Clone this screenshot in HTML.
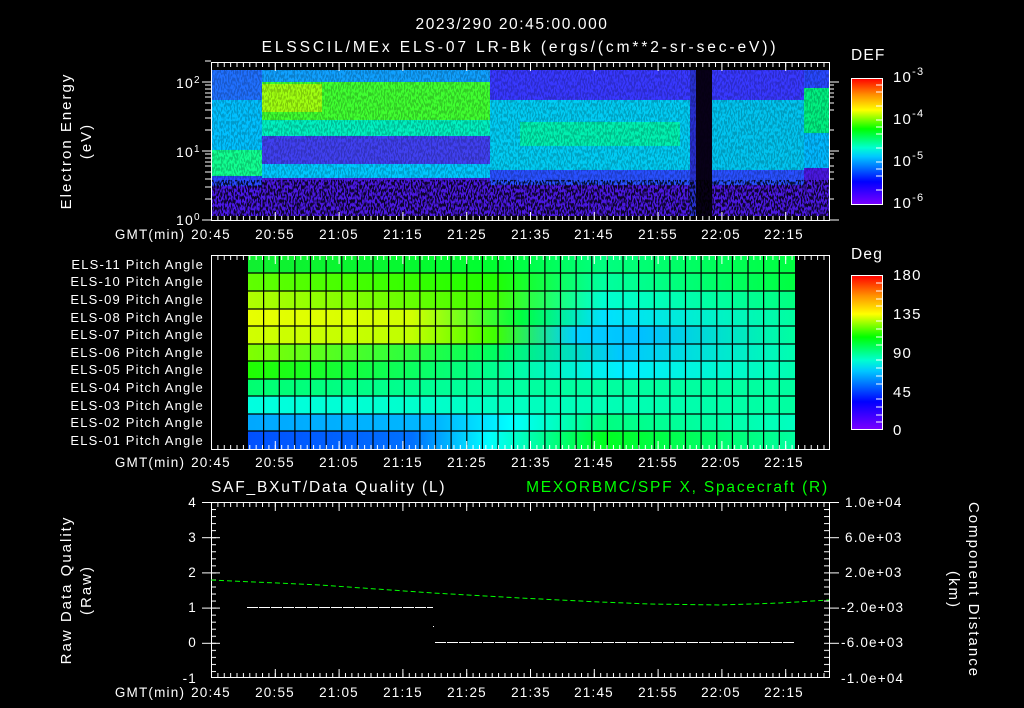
<!DOCTYPE html>
<html><head><meta charset="utf-8"><style>
html,body{margin:0;padding:0;background:#000;}
svg{display:block;}
text{font-family:"Liberation Sans",sans-serif;fill:#fff;letter-spacing:1.2px;}
</style></head><body>
<svg width="1024" height="708" viewBox="0 0 1024 708" xmlns="http://www.w3.org/2000/svg">
<defs>
 <pattern id="tmin" x="211" y="0" width="6.38" height="708" patternUnits="userSpaceOnUse"><rect x="0" y="0" width="1" height="708" fill="#fff"/></pattern>
 <pattern id="tmaj" x="211" y="0" width="63.8" height="708" patternUnits="userSpaceOnUse"><rect x="0" y="0" width="1" height="708" fill="#fff"/></pattern>
 <pattern id="ymin" x="0" y="502" width="20" height="7.04" patternUnits="userSpaceOnUse"><rect x="0" y="0" width="20" height="1" fill="#fff"/></pattern>
 <pattern id="ymaj" x="0" y="502" width="20" height="35.2" patternUnits="userSpaceOnUse"><rect x="0" y="0" width="20" height="1" fill="#fff"/></pattern>
 <linearGradient id="cb" x1="0" y1="1" x2="0" y2="0">
  <stop offset="0" stop-color="#7a00ff"/><stop offset="0.18" stop-color="#0000ff"/><stop offset="0.38" stop-color="#00c8ff"/><stop offset="0.45" stop-color="#00ffd0"/><stop offset="0.6" stop-color="#00ff00"/><stop offset="0.75" stop-color="#ffff00"/><stop offset="0.87" stop-color="#ff9000"/><stop offset="1" stop-color="#ff0000"/>
 </linearGradient>
 <filter id="nz" x="0" y="0" width="1" height="1"><feTurbulence type="fractalNoise" baseFrequency="0.7 0.28" numOctaves="1" seed="5"/><feColorMatrix type="matrix" values="0 0 0 0 0  0 0 0 0 0  0 0 0 0 0  0 0 0 -9 4.9"/></filter>
 <linearGradient id="r11" gradientUnits="userSpaceOnUse" x1="248" x2="795" y1="0" y2="0"><stop offset="0" stop-color="#10f030"/><stop offset="0.45" stop-color="#00ff30"/><stop offset="0.65" stop-color="#00ff80"/><stop offset="1" stop-color="#00ff40"/></linearGradient>
 <linearGradient id="r10" gradientUnits="userSpaceOnUse" x1="248" x2="795" y1="0" y2="0"><stop offset="0" stop-color="#60ff00"/><stop offset="0.45" stop-color="#20ff00"/><stop offset="0.65" stop-color="#00ffa0"/><stop offset="1" stop-color="#00ff40"/></linearGradient>
 <linearGradient id="r9" gradientUnits="userSpaceOnUse" x1="248" x2="795" y1="0" y2="0"><stop offset="0" stop-color="#b0ff00"/><stop offset="0.45" stop-color="#40ff00"/><stop offset="0.65" stop-color="#00ffd0"/><stop offset="1" stop-color="#00ff80"/></linearGradient>
 <linearGradient id="r8" gradientUnits="userSpaceOnUse" x1="248" x2="795" y1="0" y2="0"><stop offset="0" stop-color="#e8ff00"/><stop offset="0.3" stop-color="#d0ff00"/><stop offset="0.5" stop-color="#00ff40"/><stop offset="0.65" stop-color="#00e0ff"/><stop offset="1" stop-color="#00ffa0"/></linearGradient>
 <linearGradient id="r7" gradientUnits="userSpaceOnUse" x1="248" x2="795" y1="0" y2="0"><stop offset="0" stop-color="#d0ff00"/><stop offset="0.3" stop-color="#c0ff00"/><stop offset="0.45" stop-color="#40ff00"/><stop offset="0.6" stop-color="#00d0ff"/><stop offset="0.72" stop-color="#00c0ff"/><stop offset="1" stop-color="#00ffa0"/></linearGradient>
 <linearGradient id="r6" gradientUnits="userSpaceOnUse" x1="248" x2="795" y1="0" y2="0"><stop offset="0" stop-color="#80ff00"/><stop offset="0.45" stop-color="#00ff60"/><stop offset="0.68" stop-color="#00c8ff"/><stop offset="1" stop-color="#00ffb0"/></linearGradient>
 <linearGradient id="r5" gradientUnits="userSpaceOnUse" x1="248" x2="795" y1="0" y2="0"><stop offset="0" stop-color="#20ff00"/><stop offset="0.45" stop-color="#00ff90"/><stop offset="0.68" stop-color="#00eeff"/><stop offset="1" stop-color="#00ffb0"/></linearGradient>
 <linearGradient id="r4" gradientUnits="userSpaceOnUse" x1="248" x2="795" y1="0" y2="0"><stop offset="0" stop-color="#00ff70"/><stop offset="0.45" stop-color="#00ffa0"/><stop offset="1" stop-color="#00ffa0"/></linearGradient>
 <linearGradient id="r3" gradientUnits="userSpaceOnUse" x1="248" x2="795" y1="0" y2="0"><stop offset="0" stop-color="#00ffe0"/><stop offset="0.5" stop-color="#00ffc0"/><stop offset="1" stop-color="#00ffa0"/></linearGradient>
 <linearGradient id="r2" gradientUnits="userSpaceOnUse" x1="248" x2="795" y1="0" y2="0"><stop offset="0" stop-color="#00a8ff"/><stop offset="0.35" stop-color="#00b8ff"/><stop offset="0.48" stop-color="#00ffff"/><stop offset="0.65" stop-color="#00ff80"/><stop offset="1" stop-color="#00ffc0"/></linearGradient>
 <linearGradient id="r1" gradientUnits="userSpaceOnUse" x1="248" x2="795" y1="0" y2="0"><stop offset="0" stop-color="#0050ff"/><stop offset="0.3" stop-color="#0070ff"/><stop offset="0.44" stop-color="#00ffff"/><stop offset="0.65" stop-color="#00ff20"/><stop offset="1" stop-color="#00ffa0"/></linearGradient>
</defs>

<text x="512" y="29" font-size="15.5" text-anchor="middle" style="letter-spacing:1.6px">2023/290 20:45:00.000</text>
<text x="520" y="52" font-size="15.5" text-anchor="middle" style="letter-spacing:2.9px">ELSSCIL/MEx ELS-07 LR-Bk  (ergs/(cm**2-sr-sec-eV))</text>

<!-- Panel 1 -->
<g>
 <rect x="211" y="70" width="51" height="30" fill="#2070ff"/>
 <rect x="211" y="100" width="51" height="50" fill="#00c0ff"/>
 <rect x="211" y="150" width="51" height="26" fill="#10ff90"/>
 <rect x="211" y="176" width="51" height="10" fill="#2848ff"/>
 <rect x="211" y="186" width="51" height="30" fill="#4a18e8"/>

 <rect x="262" y="70" width="228" height="12" fill="#10a0ff"/>
 <rect x="262" y="82" width="228" height="38" fill="#40ff30"/>
 <rect x="262" y="84" width="60" height="28" fill="#a0ff10"/>
 <rect x="262" y="120" width="228" height="16" fill="#00f0c0"/>
 <rect x="262" y="136" width="228" height="28" fill="#4040f0"/>
 <rect x="262" y="164" width="228" height="14" fill="#00c8ff"/>
 <rect x="262" y="178" width="228" height="38" fill="#4a18e0"/>

 <rect x="490" y="70" width="206" height="30" fill="#3838ff"/>
 <rect x="490" y="100" width="206" height="70" fill="#00ccf4"/>
 <rect x="520" y="122" width="160" height="24" fill="#00f0b0"/>
 <rect x="490" y="170" width="206" height="15" fill="#2850ff"/>
 <rect x="490" y="185" width="206" height="31" fill="#4a18e0"/>

 <rect x="696" y="70" width="16" height="146" fill="#080018"/>
 <rect x="690" y="70" width="6" height="146" fill="#2830d0"/>

 <rect x="712" y="70" width="92" height="30" fill="#3838ff"/>
 <rect x="712" y="100" width="92" height="70" fill="#00c4f0"/>
 <rect x="712" y="170" width="92" height="15" fill="#2850ff"/>
 <rect x="712" y="185" width="92" height="31" fill="#4a18e0"/>

 <rect x="804" y="70" width="25" height="18" fill="#2848ff"/>
 <rect x="804" y="88" width="25" height="45" fill="#00f080"/>
 <rect x="804" y="133" width="25" height="35" fill="#00b8ff"/>
 <rect x="804" y="168" width="25" height="48" fill="#4a18e0"/>

 <rect x="211" y="70" width="618" height="110" filter="url(#nz)" opacity="0.2"/>
 <rect x="211" y="180" width="618" height="36" filter="url(#nz)" opacity="0.8"/>
</g>
<rect x="211.5" y="62.5" width="618" height="158" fill="none" stroke="#fff"/>
<rect x="211" y="63" width="618" height="4" fill="url(#tmin)"/>
<rect x="211" y="63" width="618" height="8" fill="url(#tmaj)"/>
<rect x="211" y="216" width="618" height="4" fill="url(#tmin)"/>
<rect x="211" y="212" width="618" height="8" fill="url(#tmaj)"/>
<path d="M202 82H211M205 61H211M205 85H211M205 89H211M205 93H211M205 97H211M205 103H211M205 110H211M205 118H211M205 130H211M202 151H211M205 154H211M205 158H211M205 162H211M205 166H211M205 172H211M205 179H211M205 187H211M205 199H211M202 220H211
M829 82H839M829 85H834M829 89H834M829 93H834M829 97H834M829 103H834M829 110H834M829 130H834M829 151H839M829 154H834M829 158H834M829 166H834M829 172H834M829 179H834M829 199H834M829 220H839" stroke="#fff" fill="none"/>
<text x="176" y="88" font-size="14">10<tspan font-size="10" dy="-5">2</tspan></text>
<text x="176" y="157" font-size="14">10<tspan font-size="10" dy="-5">1</tspan></text>
<text x="176" y="225" font-size="14">10<tspan font-size="10" dy="-5">0</tspan></text>
<text transform="translate(71,141) rotate(-90)" font-size="15" text-anchor="middle" style="letter-spacing:2px">Electron Energy</text>
<text transform="translate(91,141) rotate(-90)" font-size="15" text-anchor="middle" style="letter-spacing:2px">(eV)</text>
<g font-size="13.5" text-anchor="middle">
<text x="150" y="239">GMT(min)</text>
<text x="211" y="239">20:45</text><text x="275" y="239">20:55</text><text x="339" y="239">21:05</text><text x="403" y="239">21:15</text><text x="467" y="239">21:25</text><text x="531" y="239">21:35</text><text x="594" y="239">21:45</text><text x="658" y="239">21:55</text><text x="721" y="239">22:05</text><text x="784" y="239">22:15</text>
</g>
<text x="851" y="60" font-size="15.5">DEF</text>
<rect x="851.5" y="78.5" width="31" height="126" fill="url(#cb)" stroke="#fff"/>
<path d="M876 85H882M876 92H882M876 106H882M876 120H882M876 127H882M876 134H882M876 148H882M876 162H882M876 169H882M876 176H882M876 190H882" stroke="#fff"/>
<g font-size="15">
<text x="893" y="82">10<tspan font-size="11" dy="-7">-3</tspan></text>
<text x="893" y="124">10<tspan font-size="11" dy="-7">-4</tspan></text>
<text x="893" y="166">10<tspan font-size="11" dy="-7">-5</tspan></text>
<text x="893" y="208">10<tspan font-size="11" dy="-7">-6</tspan></text>
</g>

<!-- Panel 2 -->
<rect x="248" y="255" width="547" height="18" fill="url(#r11)"/>
<rect x="248" y="273" width="547" height="18" fill="url(#r10)"/>
<rect x="248" y="291" width="547" height="18" fill="url(#r9)"/>
<rect x="248" y="309" width="547" height="17" fill="url(#r8)"/>
<rect x="248" y="326" width="547" height="18" fill="url(#r7)"/>
<rect x="248" y="344" width="547" height="17" fill="url(#r6)"/>
<rect x="248" y="361" width="547" height="18" fill="url(#r5)"/>
<rect x="248" y="379" width="547" height="17" fill="url(#r4)"/>
<rect x="248" y="396" width="547" height="18" fill="url(#r3)"/>
<rect x="248" y="414" width="547" height="17" fill="url(#r2)"/>
<rect x="248" y="431" width="547" height="18" fill="url(#r1)"/>
<path d="M248 273H795M248 291H795M248 309H795M248 326H795M248 344H795M248 361H795M248 379H795M248 396H795M248 414H795M248 431H795" stroke="#000" stroke-width="1.2"/>
<g stroke="#000" stroke-width="1.2">
<path d="M263.6 255V449M279.3 255V449M294.9 255V449M310.5 255V449M326.1 255V449M341.8 255V449M357.4 255V449M373 255V449M388.6 255V449M404.3 255V449M419.9 255V449M435.5 255V449M451.1 255V449M466.8 255V449M482.4 255V449M498 255V449M513.6 255V449M529.3 255V449M544.9 255V449M560.5 255V449M576.1 255V449M591.8 255V449M607.4 255V449M623 255V449M638.6 255V449M654.3 255V449M669.9 255V449M685.5 255V449M701.1 255V449M716.8 255V449M732.4 255V449M748 255V449M763.6 255V449M779.3 255V449"/>
</g>
<rect x="211.5" y="255.5" width="618" height="194" fill="none" stroke="#fff"/>
<rect x="211" y="256" width="618" height="4" fill="url(#tmin)"/>
<rect x="211" y="256" width="618" height="8" fill="url(#tmaj)"/>
<rect x="211" y="445" width="618" height="4" fill="url(#tmin)"/>
<rect x="211" y="441" width="618" height="8" fill="url(#tmaj)"/>
<g font-size="13" text-anchor="end" style="letter-spacing:1.6px">
<text x="204" y="269">ELS-11 Pitch Angle</text>
<text x="204" y="286">ELS-10 Pitch Angle</text>
<text x="204" y="304">ELS-09 Pitch Angle</text>
<text x="204" y="322">ELS-08 Pitch Angle</text>
<text x="204" y="339">ELS-07 Pitch Angle</text>
<text x="204" y="357">ELS-06 Pitch Angle</text>
<text x="204" y="374">ELS-05 Pitch Angle</text>
<text x="204" y="392">ELS-04 Pitch Angle</text>
<text x="204" y="410">ELS-03 Pitch Angle</text>
<text x="204" y="427">ELS-02 Pitch Angle</text>
<text x="204" y="445">ELS-01 Pitch Angle</text>
</g>
<g font-size="13.5" text-anchor="middle">
<text x="150" y="467">GMT(min)</text>
<text x="211" y="467">20:45</text><text x="275" y="467">20:55</text><text x="339" y="467">21:05</text><text x="403" y="467">21:15</text><text x="467" y="467">21:25</text><text x="531" y="467">21:35</text><text x="594" y="467">21:45</text><text x="658" y="467">21:55</text><text x="721" y="467">22:05</text><text x="784" y="467">22:15</text>
</g>
<text x="851" y="259" font-size="15.5">Deg</text>
<rect x="851.5" y="275.5" width="31" height="154" fill="url(#cb)" stroke="#fff"/>
<path d="M876 283H882M876 291H882M876 299H882M876 306H882M876 321H882M876 329H882M876 337H882M876 345H882M876 360H882M876 368H882M876 376H882M876 384H882M876 399H882M876 407H882M876 415H882M876 422H882" stroke="#fff"/>
<g font-size="15">
<text x="893" y="280">180</text>
<text x="893" y="319">135</text>
<text x="893" y="358">90</text>
<text x="893" y="397">45</text>
<text x="893" y="435">0</text>
</g>

<!-- Panel 3 -->
<text x="211" y="492" font-size="15.5" style="letter-spacing:1.8px">SAF_BXuT/Data Quality (L)</text>
<text x="829" y="492" font-size="15.5" text-anchor="end" style="fill:#00ff00;letter-spacing:1.8px">MEXORBMC/SPF X, Spacecraft (R)</text>
<rect x="211.5" y="502.5" width="618" height="175" fill="none" stroke="#fff"/>
<rect x="211" y="503" width="618" height="4" fill="url(#tmin)"/>
<rect x="211" y="503" width="618" height="8" fill="url(#tmaj)"/>
<rect x="211" y="673" width="618" height="4" fill="url(#tmin)"/>
<rect x="211" y="669" width="618" height="8" fill="url(#tmaj)"/>
<rect x="211" y="502" width="5" height="176" fill="url(#ymin)"/>
<rect x="202" y="502" width="18" height="176" fill="url(#ymaj)"/>
<rect x="824" y="502" width="5" height="176" fill="url(#ymin)"/>
<rect x="829" y="502" width="10" height="176" fill="url(#ymaj)"/>
<g font-size="13.5" text-anchor="end">
<text x="197" y="507">4</text><text x="197" y="542">3</text><text x="197" y="577">2</text><text x="197" y="612">1</text><text x="197" y="647">0</text><text x="197" y="683">-1</text>
</g>
<g font-size="13.5">
<text x="845" y="507">1.0e+04</text><text x="845" y="542">6.0e+03</text><text x="845" y="577">2.0e+03</text><text x="841" y="612">-2.0e+03</text><text x="841" y="647">-6.0e+03</text><text x="841" y="683">-1.0e+04</text>
</g>
<path d="M247 607.5H433" stroke="#fff" stroke-dasharray="11 1"/>
<path d="M435 642.5H795" stroke="#fff" stroke-dasharray="11 1"/>
<rect x="433" y="626" width="1" height="1" fill="#fff"/>
<path d="M211 580L320 585L433 593L520 598L600 602L650 604L720 605L780 603L829 600" stroke="#00ff00" fill="none" stroke-dasharray="5 3"/>
<text transform="translate(71,590) rotate(-90)" font-size="15" text-anchor="middle" style="letter-spacing:2px">Raw Data Quality</text>
<text transform="translate(91,590) rotate(-90)" font-size="15" text-anchor="middle" style="letter-spacing:2px">(Raw)</text>
<text transform="translate(969,590) rotate(90)" font-size="15" text-anchor="middle" style="letter-spacing:2px">Component Distance</text>
<text transform="translate(949,590) rotate(90)" font-size="15" text-anchor="middle" style="letter-spacing:2px">(km)</text>
<g font-size="13.5" text-anchor="middle">
<text x="150" y="697">GMT(min)</text>
<text x="211" y="697">20:45</text><text x="275" y="697">20:55</text><text x="339" y="697">21:05</text><text x="403" y="697">21:15</text><text x="467" y="697">21:25</text><text x="531" y="697">21:35</text><text x="594" y="697">21:45</text><text x="658" y="697">21:55</text><text x="721" y="697">22:05</text><text x="784" y="697">22:15</text>
</g>
</svg>
</body></html>
